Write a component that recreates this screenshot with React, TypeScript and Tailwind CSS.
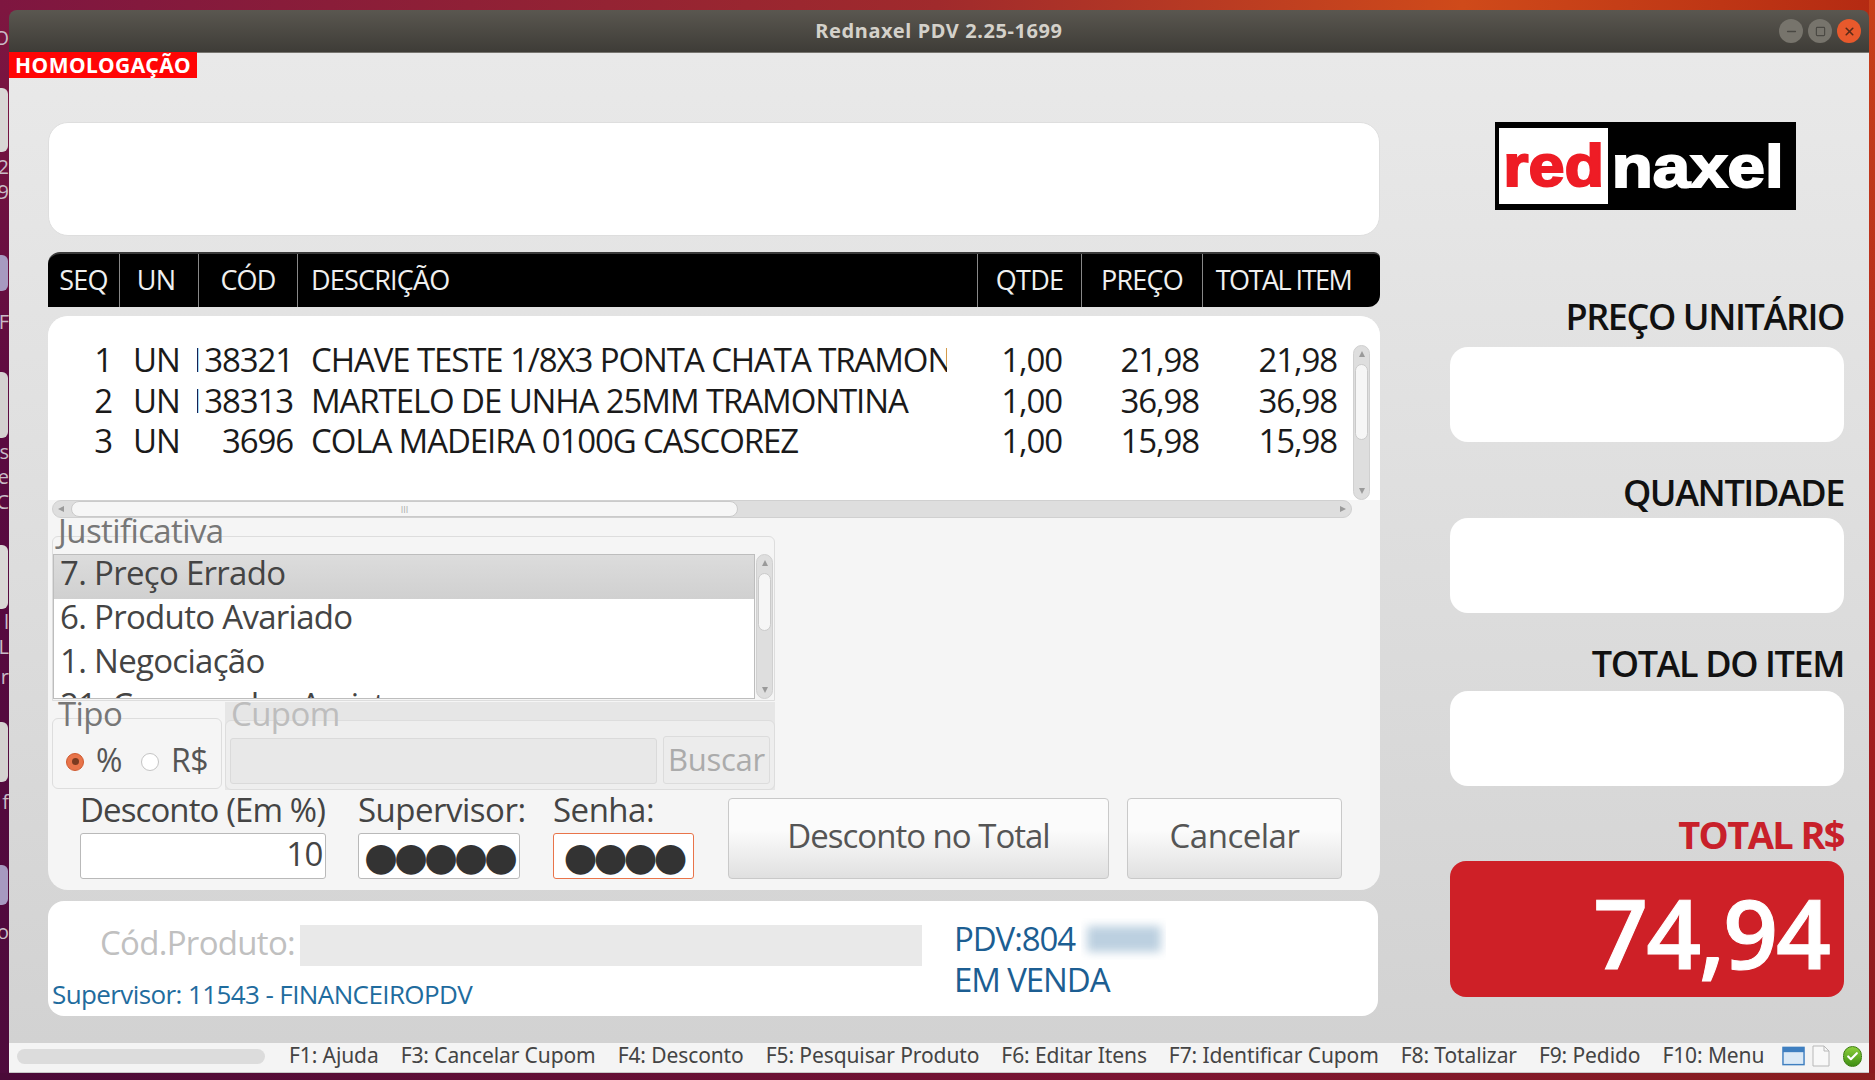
import { Check, Minus, Square, X } from 'lucide-react'

const rows = [
  { seq: '1', cod: '138321', desc: 'CHAVE TESTE 1/8X3 PONTA CHATA TRAMONTINA', preco: '21,98' },
  { seq: '2', cod: '138313', desc: 'MARTELO DE UNHA 25MM TRAMONTINA', preco: '36,98' },
  { seq: '3', cod: '3696', desc: 'COLA MADEIRA 0100G CASCOREZ', preco: '15,98' },
]

const shortcuts = [
  'F1: Ajuda',
  'F3: Cancelar Cupom',
  'F4: Desconto',
  'F5: Pesquisar Produto',
  'F6: Editar Itens',
  'F7: Identificar Cupom',
  'F8: Totalizar',
  'F9: Pedido',
  'F10: Menu',
]

// pedacos dos icones e nomes da area de trabalho que aparecem atras da janela
const desktopBlobs = [
  { top: 'top-[78px] h-[64px] bg-[#d9d7d5]' },
  { top: 'top-[245px] h-[36px] bg-[#a79ac0]' },
  { top: 'top-[362px] h-[66px] bg-[#d4d2d0]' },
  { top: 'top-[535px] h-[64px] bg-[#dad8d6]' },
  { top: 'top-[712px] h-[60px] bg-[#d4d2d0]' },
  { top: 'top-[855px] h-[40px] bg-[#a79ac0]' },
]

const desktopLetters = [
  { text: 'O', top: 'top-[18px]' },
  { text: '2', top: 'top-[147px]' },
  { text: '9', top: 'top-[172px]' },
  { text: 'F', top: 'top-[302px]' },
  { text: 's', top: 'top-[432px]' },
  { text: 'e', top: 'top-[457px]' },
  { text: 'C', top: 'top-[482px]' },
  { text: 'l', top: 'top-[602px]' },
  { text: 'L', top: 'top-[627px]' },
  { text: 'r', top: 'top-[657px]' },
  { text: 'f', top: 'top-[782px]' },
  { text: 'o', top: 'top-[912px]' },
]

function Arrow({ dir }: { dir: 'up' | 'down' | 'left' | 'right' }) {
  const points = {
    up: '4,1 7,7 1,7',
    down: '1,1 7,1 4,7',
    left: '7,1 7,7 1,4',
    right: '1,1 7,4 1,7',
  }
  return (
    <svg width="8" height="8" viewBox="0 0 8 8" className="shrink-0">
      <polygon points={points[dir]} fill="#9a9a9a" />
    </svg>
  )
}

function VScroll({ thumbTop, thumbHeight, height }: { thumbTop: string; thumbHeight: string; height: string }) {
  return (
    <div className={`${height} w-[17px] shrink-0 rounded-full border border-[#d0d0d0] bg-[#dedede] flex flex-col items-center justify-between py-1 relative`}>
      <Arrow dir="up" />
      <div className={`absolute left-[1px] right-[1px] ${thumbTop} ${thumbHeight} rounded-full border border-[#cacaca] bg-[#f6f6f6]`} />
      <Arrow dir="down" />
    </div>
  )
}

function Legend({ children, muted, top }: { children: string; muted?: boolean; top: string }) {
  return (
    <span className={`absolute left-[5px] ${top} text-[33px] leading-[36px] tracking-[-0.6px] ${muted ? 'text-[#bdbdbd]' : 'text-[#777777]'}`}>
      {children}
    </span>
  )
}

export default function App() {
  return (
    <div
      className="relative w-[1875px] h-[1080px] overflow-hidden bg-[linear-gradient(90deg,#7e1640_0%,#a02a2c_50%,#cf4a1a_78%,#b42a12_100%)] pt-[10px] pl-[9px] pr-[6px]"
      style={{ fontFamily: '"Open Sans", "Noto Sans", sans-serif' }}
    >
      <div className="absolute left-0 top-[10px] w-[9px] h-full bg-[linear-gradient(180deg,#7e1640,#5a0a40_40%,#4e0a3c)] overflow-hidden">
        {desktopBlobs.map((b) => (
          <div key={b.top} className={`absolute left-0 w-[8px] rounded-r-md ${b.top}`} />
        ))}
        {desktopLetters.map((l) => (
          <span key={l.top} className={`absolute right-0 ${l.top} text-[20px] leading-none text-[#c9bcc6]`}>
            {l.text}
          </span>
        ))}
      </div>
      <div className="absolute right-0 top-0 w-[6px] h-full bg-[linear-gradient(180deg,#c8401a,#a81e1e_60%,#8a1a1e)]" />
      <div className="absolute left-0 bottom-0 w-full h-[7px] bg-[linear-gradient(90deg,#4a0a38,#7a1432_60%,#8a1e1e)]" />

      <div className="relative w-[1860px] h-[1063px] flex flex-col rounded-t-lg overflow-hidden">
        {/* barra de titulo */}
        <div className="h-[43px] shrink-0 bg-[linear-gradient(180deg,#5a5750,#3e3c37)] border-b border-[#777570] flex items-center justify-center relative">
          <span className="text-[20px] font-bold tracking-[0.6px] text-[#d4d1ca]" style={{ fontFamily: '"Noto Sans", sans-serif' }}>
            Rednaxel PDV 2.25-1699
          </span>
          <div className="absolute right-[8px] top-[9px] flex gap-[5px]">
            <div className="w-[24px] h-[24px] rounded-full bg-[#77746c] flex items-center justify-center text-[#4a4843]">
              <Minus size={13} strokeWidth={3} />
            </div>
            <div className="w-[24px] h-[24px] rounded-full bg-[#77746c] flex items-center justify-center text-[#4a4843]">
              <Square size={11} strokeWidth={2.5} />
            </div>
            <div className="w-[24px] h-[24px] rounded-full bg-[#e8592c] flex items-center justify-center text-[#5a2a18]">
              <X size={13} strokeWidth={3} />
            </div>
          </div>
        </div>

        <div className="absolute left-0 top-[42px] w-[188px] h-[26px] bg-[#ff0505] flex items-center justify-center z-10">
          <span className="text-[21px] leading-none font-bold tracking-[0.5px] text-white" style={{ fontFamily: '"Noto Sans", sans-serif' }}>
            HOMOLOGAÇÃO
          </span>
        </div>

        {/* conteudo */}
        <div className="flex-1 min-h-0 bg-[linear-gradient(180deg,#e9e9e9,#d2d2d2)] flex pl-[39px] pt-[69px]">
          <div className="w-[1332px] shrink-0 flex flex-col">
            <div className="h-[114px] bg-white rounded-[20px] border border-[#dedede]" />

            <div className="mt-[16px] h-[55px] bg-black rounded-tl-[12px] rounded-tr-[6px] rounded-br-[12px] flex items-stretch text-[#f0f0f0] text-[27px] tracking-[-0.8px] border-t-2 border-[#3a3a3a]">
              <div className="w-[72px] border-r border-[#888888] flex items-center justify-center">SEQ</div>
              <div className="w-[79px] border-r border-[#888888] flex items-center justify-center pr-[6px]">UN</div>
              <div className="w-[99px] border-r border-[#888888] flex items-center justify-center">CÓD</div>
              <div className="w-[680px] border-r border-[#888888] flex items-center pl-[13px]">DESCRIÇÃO</div>
              <div className="w-[104px] border-r border-[#888888] flex items-center justify-center">QTDE</div>
              <div className="w-[121px] border-r border-[#888888] flex items-center justify-center">PREÇO</div>
              <div className="flex-1 flex items-center justify-center pr-[16px] whitespace-nowrap tracking-[-1.5px]">TOTAL ITEM</div>
            </div>

            {/* itens + desconto */}
            <div className="mt-[9px] h-[574px] bg-[#f5f5f5] rounded-[20px] overflow-hidden flex flex-col">
              <div className="h-[184px] shrink-0 bg-white flex pt-[24px] relative">
                <div className="flex flex-col text-[#1a1a1a] text-[33px] leading-[40.6px] tracking-[-1.1px]">
                  {rows.map((r) => (
                    <div key={r.seq} className="flex h-[40.6px] whitespace-nowrap">
                      <div className="w-[64px] text-right">{r.seq}</div>
                      <div className="w-[85px] pl-[21px]">UN</div>
                      <div className="w-[96px] text-right overflow-hidden flex justify-end">{r.cod}</div>
                      <div className="w-[636px] ml-[18px] overflow-hidden">{r.desc}</div>
                      <div className="w-[115px] text-right">1,00</div>
                      <div className="w-[137px] text-right">{r.preco}</div>
                      <div className="w-[138px] text-right">{r.preco}</div>
                    </div>
                  ))}
                </div>
                <div className="absolute right-[10px] top-[29px]">
                  <VScroll height="h-[155px]" thumbTop="top-[18px]" thumbHeight="h-[76px]" />
                </div>
              </div>

              <div className="h-[18px] shrink-0 mx-[4px] mr-[28px] rounded-full border border-[#d0d0d0] bg-[#dedede] flex items-center justify-between px-[4px] relative">
                <Arrow dir="left" />
                <div className="absolute left-[18px] top-0 w-[667px] h-full rounded-full border border-[#cacaca] bg-[#f6f6f6] flex items-center justify-center text-[9px] leading-none text-[#aaaaaa]">
                  III
                </div>
                <Arrow dir="right" />
              </div>

              <div className="w-[723px] ml-[4px] mt-[18px] relative rounded-t-md border border-[#dddddd] pt-[17px] h-[165px] flex items-start">
                <Legend top="-top-[24px]">Justificativa</Legend>
                <div className="w-[702px] h-[145px] bg-white border border-[#bdbdbd] overflow-hidden text-[#444444] text-[33px] leading-[36px] tracking-[-0.7px]">
                  <div className="h-[44px] bg-[linear-gradient(180deg,#dcdcdc,#d0d0d0)] pl-[6px]">7. Preço Errado</div>
                  <div className="h-[44px] pl-[6px]">6. Produto Avariado</div>
                  <div className="h-[44px] pl-[6px]">1. Negociação</div>
                  <div className="h-[44px] pl-[6px]">21. Compra dos Assist</div>
                </div>
                <div className="ml-[1px]">
                  <VScroll height="h-[145px]" thumbTop="top-[18px]" thumbHeight="h-[58px]" />
                </div>
              </div>

              <div className="w-[723px] ml-[4px] mt-[1px] flex h-[88px]">
                <div className="w-[170px] mt-[16px] h-[71px] relative rounded-md border border-[#dddddd] flex items-center pl-[13px] pt-[12px] text-[#555555] text-[32px] tracking-[-0.5px]">
                  <Legend top="-top-[23px]">Tipo</Legend>
                  <span className="w-[18px] h-[18px] rounded-full bg-[#e8744a] border border-[#cf5a30] flex items-center justify-center mt-[4px]">
                    <span className="w-[7px] h-[7px] rounded-full bg-[#7a3a20]" />
                  </span>
                  <span className="ml-[12px] mr-[19px]">%</span>
                  <span className="w-[18px] h-[18px] rounded-full bg-white border border-[#c4c4c4] mt-[4px]" />
                  <span className="ml-[12px]">R$</span>
                </div>
                <div className="ml-[3px] flex-1 bg-[#e6e6e6] flex flex-col">
                  <div className="h-[18px] shrink-0" />
                  <div className="relative flex-1 bg-[#eeeeee] rounded-md border border-[#dddddd] flex items-end pb-[5px] gap-[6px] pl-[4px] pr-[4px]">
                    <Legend muted top="-top-[25px]">Cupom</Legend>
                    <div className="w-[427px] h-[46px] bg-[#e8e8e8] border border-[#dadada] rounded-[3px]" />
                    <div className="flex-1 h-[48px] rounded-[3px] border border-[#dcdcdc] bg-[#ececec] flex items-center justify-center pb-[2px] text-[#ababab] text-[31px] tracking-[-0.3px]">
                      Buscar
                    </div>
                  </div>
                </div>
              </div>

              <div className="flex mt-[3px] pl-[32px] items-end">
                <div className="w-[246px] flex flex-col">
                  <span className="text-[33px] leading-[34px] tracking-[-0.9px] text-[#444444] whitespace-nowrap">Desconto (Em %)</span>
                  <div className="mt-[6px] h-[46px] bg-white border border-[#b9b9b9] rounded-[3px] flex items-center justify-end pr-[2px] pb-[5px] text-[#444444] text-[33px] tracking-[-0.5px]">10</div>
                </div>
                <div className="w-[162px] ml-[32px] flex flex-col">
                  <span className="text-[33px] leading-[34px] tracking-[-0.5px] text-[#444444] whitespace-nowrap">Supervisor:</span>
                  <div className="mt-[6px] h-[46px] bg-white border border-[#b9b9b9] rounded-[3px] flex items-center justify-center text-[#333333] text-[39px] leading-none tracking-[-4px] overflow-hidden" style={{ fontFamily: '"DejaVu Sans", sans-serif' }}>
                    ●●●●●
                  </div>
                </div>
                <div className="w-[141px] ml-[33px] flex flex-col">
                  <span className="text-[33px] leading-[34px] tracking-[-0.5px] text-[#444444] whitespace-nowrap">Senha:</span>
                  <div className="mt-[6px] h-[46px] bg-white border-[1.5px] border-[#e9744a] rounded-[3px] flex items-center justify-center text-[#333333] text-[39px] leading-none tracking-[-4px] overflow-hidden" style={{ fontFamily: '"DejaVu Sans", sans-serif' }}>
                    ●●●●
                  </div>
                </div>
                <div className="w-[381px] h-[81px] ml-[34px] rounded-[4px] border border-[#c9c9c9] bg-[linear-gradient(180deg,#fbfbfb_40%,#e0e0e0)] flex items-center justify-center pb-[6px] text-[#555555] text-[33px] tracking-[-1px]">
                  Desconto no Total
                </div>
                <div className="w-[215px] h-[81px] ml-[18px] rounded-[4px] border border-[#c9c9c9] bg-[linear-gradient(180deg,#fbfbfb_40%,#e0e0e0)] flex items-center justify-center pb-[6px] text-[#555555] text-[33px] tracking-[-0.5px]">
                  Cancelar
                </div>
              </div>
            </div>

            {/* rodape de venda */}
            <div className="mt-[11px] h-[115px] w-[1330px] bg-white rounded-[16px] flex relative">
              <div className="w-[906px] shrink-0 flex flex-col pl-[4px]">
                <div className="flex items-center mt-[24px] h-[41px]">
                  <span className="w-[248px] text-right pr-[5px] pb-[6px] text-[#c0c0c0] text-[33px] leading-[41px] tracking-[-0.7px] whitespace-nowrap">Cód.Produto:</span>
                  <div className="w-[622px] h-[41px] bg-[#e9e9e9]" />
                </div>
                <span className="mt-[13px] text-[#1f6c9e] text-[26px] leading-[30px] tracking-[-0.6px] whitespace-nowrap">
                  Supervisor: 11543 - FINANCEIROPDV
                </span>
              </div>
              <div className="flex flex-col pt-[17px] text-[#1c5e92] text-[33px] leading-[40px] tracking-[-1.1px]">
                <div className="flex items-center">
                  <span>PDV:804</span>
                  <div className="ml-[6px] w-[85px] h-[42px] overflow-hidden flex items-center justify-center">
                    <div className="w-[74px] h-[26px] bg-[#bcd0e0] blur-[5px]" />
                  </div>
                </div>
                <span>EM VENDA</span>
              </div>
            </div>
          </div>

          {/* coluna direita */}
          <div className="ml-[70px] w-[394px] shrink-0 flex flex-col items-end">
            <div className="w-[301px] h-[88px] self-start ml-[45px] bg-black flex p-[4px] pr-0 border-t-2 border-black">
              <div className="w-[109px] h-[76px] bg-white flex items-center justify-center">
                <span className="text-[#ee1c25] text-[60px] leading-none font-bold scale-x-[1.08] [-webkit-text-stroke:2px_#ee1c25]" style={{ fontFamily: '"Liberation Sans", sans-serif' }}>
                  red
                </span>
              </div>
              <div className="flex-1 flex items-center justify-center pr-[8px]">
                <span className="text-white text-[60px] leading-none font-bold scale-x-[1.12] [-webkit-text-stroke:2px_white]" style={{ fontFamily: '"Liberation Sans", sans-serif' }}>
                  naxel
                </span>
              </div>
            </div>

            <span className="mt-[87px] h-[40px] text-[36px] leading-[40px] font-semibold tracking-[-1.4px] text-[#111111] whitespace-nowrap">PREÇO UNITÁRIO</span>
            <div className="mt-[10px] w-full h-[95px] bg-white rounded-[18px]" />
            <span className="mt-[31px] h-[40px] text-[36px] leading-[40px] font-semibold tracking-[-1.4px] text-[#111111] whitespace-nowrap">QUANTIDADE</span>
            <div className="mt-[5px] w-full h-[95px] bg-white rounded-[18px]" />
            <span className="mt-[31px] h-[40px] text-[36px] leading-[40px] font-semibold tracking-[-1.4px] text-[#111111] whitespace-nowrap">TOTAL DO ITEM</span>
            <div className="mt-[7px] w-full h-[95px] bg-white rounded-[18px]" />
            <span className="mt-[28px] h-[40px] text-[38px] leading-[40px] font-bold tracking-[-1.6px] text-[#c8202a] whitespace-nowrap">TOTAL R$</span>
            <div className="mt-[7px] w-full h-[136px] bg-[#ce2027] rounded-[16px] flex items-center justify-end pr-[15px] pt-[6px]">
              <span className="text-white text-[96px] leading-none font-semibold tracking-[-2px] [-webkit-text-stroke:1px_white]">74,94</span>
            </div>
          </div>
        </div>

        {/* barra de status */}
        <div className="h-[30px] shrink-0 bg-[#f4f4f4] border-b border-[#c8c8c8] flex items-center pl-[8px] pr-[7px] pb-[3px] text-[#444444] text-[21px] tracking-[-0.1px]" style={{ fontFamily: '"Noto Sans", sans-serif' }}>
          <div className="w-[248px] h-[15px] rounded-full bg-[#dcdcdc]" />
          <div className="ml-[24px] flex gap-[22px] whitespace-nowrap">
            {shortcuts.map((s) => (
              <span key={s}>{s}</span>
            ))}
          </div>
          <svg width="23" height="20" viewBox="0 0 24 20" className="ml-auto">
            <rect x="1" y="1" width="22" height="18" fill="#dbe9f6" stroke="#3f7fc0" strokeWidth="1.5" />
            <rect x="1" y="1" width="22" height="5" fill="#3f7fc0" />
          </svg>
          <svg width="18" height="22" viewBox="0 0 18 22" className="ml-[7px]">
            <path d="M1 1h11l5 5v15H1z" fill="#f8f8f8" stroke="#b8b8b8" />
            <path d="M12 1v5h5" fill="none" stroke="#b8b8b8" />
          </svg>
          <div className="ml-[13px] w-[19px] h-[21px] rounded-full bg-[linear-gradient(180deg,#8ccf3c,#3f8f14)] border border-[#3c7c10] flex items-center justify-center text-white">
            <Check size={13} strokeWidth={4} />
          </div>
        </div>
      </div>
    </div>
  )
}
